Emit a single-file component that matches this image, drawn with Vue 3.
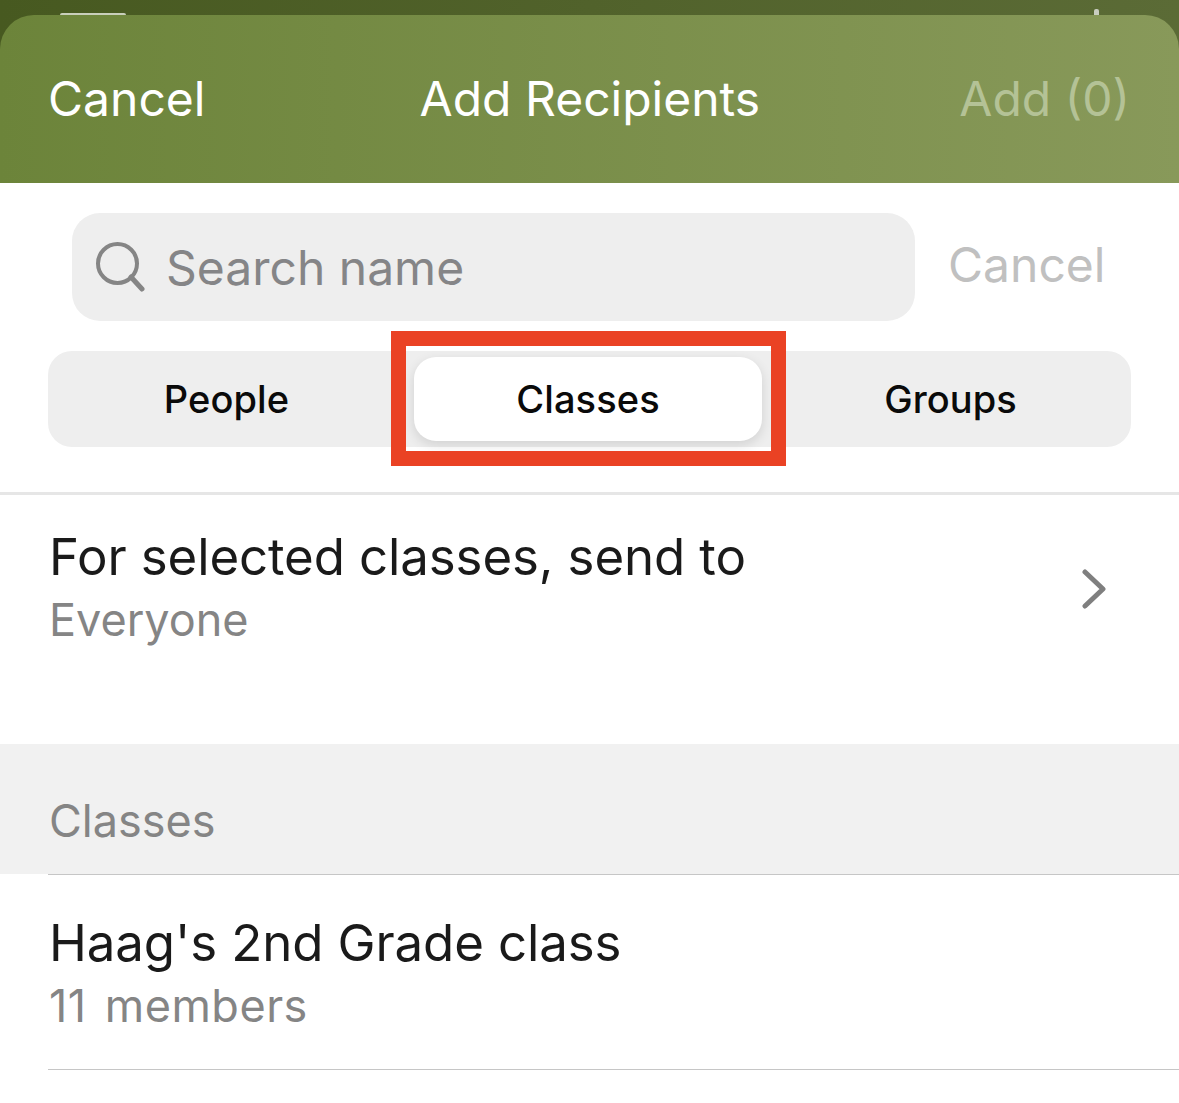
<script setup>
const tabs = ["People", "Classes", "Groups"]
const active = "Classes"
</script>

<template>
  <div class="screen">
    <div class="status">
      <span class="status-bar"></span>
      <span class="status-tick"></span>
    </div>

    <header class="nav">
      <span class="nav-btn">Cancel</span>
      <span class="nav-title">Add Recipients</span>
      <span class="nav-btn nav-add">Add (0)</span>
    </header>

    <div class="search-row">
      <div class="search-box">
        <svg class="search-icon" viewBox="0 0 50 50" fill="none" stroke="#858585" stroke-width="4" stroke-linecap="round">
          <circle cx="22.5" cy="21.5" r="19.5" />
          <path d="M36 35 L47 47" stroke-width="5" />
        </svg>
        <span class="search-text">Search name</span>
      </div>
      <span class="search-cancel">Cancel</span>
    </div>

    <div class="tabs">
      <div
        v-for="tab in tabs"
        :key="tab"
        class="tab"
        :class="{ active: tab === active }"
      >
        {{ tab }}
        <span v-if="tab === active" class="highlight"></span>
      </div>
    </div>

    <div class="send-row">
      <div>
        <div class="row-title">For selected classes, send to</div>
        <div class="row-sub">Everyone</div>
      </div>
      <svg class="chevron" viewBox="0 0 26 40" fill="none" stroke="#7f7f7f" stroke-width="5" stroke-linecap="round" stroke-linejoin="round">
        <path d="M3 3 L21 20 L3 37" />
      </svg>
    </div>

    <div class="section-head">Classes</div>

    <div class="class-row">
      <div class="row-title">Haag's 2nd Grade class</div>
      <div class="row-sub members">11 members</div>
    </div>
  </div>
</template>

<style scoped>
.screen {
  position: relative;
  width: 1179px;
  height: 1103px;
  overflow: hidden;
  background: white;
  font-family: Inter, "Liberation Sans", sans-serif;
}

.status {
  position: relative;
  height: 60px;
  margin-bottom: -45px;
  background: linear-gradient(90deg, #475920, #5b6b36);
}

.status-bar {
  position: absolute;
  left: 60px;
  top: 13px;
  width: 66px;
  height: 2px;
  background: #c9cfbb;
  border-radius: 2px 2px 0 0;
}

.status-tick {
  position: absolute;
  left: 1094px;
  top: 9px;
  width: 5px;
  height: 6px;
  background: #c9cdc0;
  border-radius: 2px 2px 0 0;
}

.nav {
  position: relative;
  height: 168px;
  padding: 0 49px 2px 48px;
  box-sizing: border-box;
  display: flex;
  align-items: center;
  justify-content: space-between;
  border-radius: 34px 34px 0 0;
  background: linear-gradient(90deg, #6c843a, #88995a);
  color: white;
  font-size: 48px;
}

.nav-title {
  margin-left: 15px;
}

.nav-add {
  color: #b4c296;
}

.search-row {
  display: flex;
  align-items: center;
  padding: 30px 0 0 72px;
}

.search-box {
  width: 843px;
  height: 108px;
  display: flex;
  align-items: center;
  gap: 21px;
  padding-left: 23px;
  box-sizing: border-box;
  background: #eeeeee;
  border-radius: 28px;
}

.search-icon {
  width: 50px;
  height: 50px;
}

.search-text {
  font-size: 48px;
  color: #858587;
}

.search-cancel {
  margin: -6px 0 0 33px;
  font-size: 48px;
  color: #c0c0c0;
}

.tabs {
  display: grid;
  grid-template-columns: repeat(3, 1fr);
  align-items: stretch;
  height: 96px;
  margin: 30px 48px 0;
  padding: 6px 0;
  box-sizing: border-box;
  background: #eeeeee;
  border-radius: 24px;
}

.tab {
  position: relative;
  display: flex;
  align-items: center;
  justify-content: center;
  font-size: 38px;
  font-weight: 500;
  letter-spacing: 0.1px;
  color: #0a0a0a;
}

.tab:first-child {
  padding-right: 4px;
}

.tab.active {
  margin: 0 8px 0 5px;
  background: white;
  border-radius: 22px;
  box-shadow: 0 4px 12px rgba(0, 0, 0, 0.12);
}

.highlight {
  position: absolute;
  top: -26px;
  left: -23px;
  right: -24px;
  bottom: -25px;
  border: 15px solid #ea4224;
}

.send-row {
  display: flex;
  align-items: flex-start;
  justify-content: space-between;
  height: 252px;
  margin-top: 45px;
  padding: 31px 71px 0 49px;
  box-sizing: border-box;
  border-top: 3px solid #e6e6e6;
}

.row-title {
  font-size: 51px;
  line-height: 62px;
  letter-spacing: -0.12px;
  color: #1a1a1a;
}

.row-sub {
  margin-top: 1px;
  font-size: 45px;
  line-height: 62px;
  color: #858585;
}

.members {
  letter-spacing: 0.5px;
  word-spacing: 5px;
}

.chevron {
  width: 26px;
  height: 40px;
  margin-top: 43px;
}

.section-head {
  height: 130px;
  padding: 49px 0 0 49px;
  box-sizing: border-box;
  background: #f1f1f1;
  font-size: 45px;
  line-height: 56px;
  color: #858585;
}

.class-row {
  height: 196px;
  margin-left: 48px;
  padding: 37px 0 0 1px;
  box-sizing: border-box;
  border-top: 1px solid #c6c6c6;
  border-bottom: 1px solid #c6c6c6;
}
</style>
